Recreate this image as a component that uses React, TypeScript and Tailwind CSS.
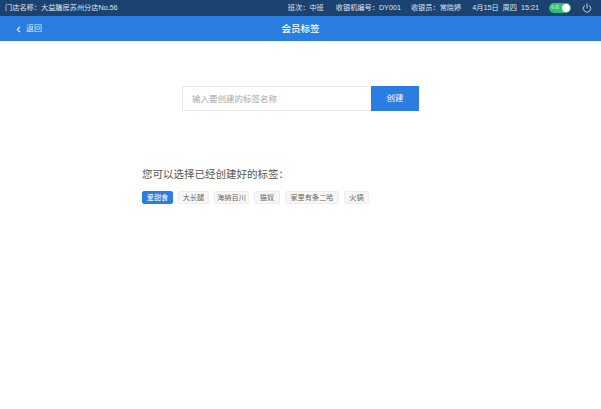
import React, { useState } from 'react';
import { ChevronLeft, Power } from 'lucide-react';

const cjk = "font-['Liberation_Sans','Noto_Sans_CJK_SC',sans-serif]";
const tags = [
  { name: '爱甜食', width: 'w-[31px]' },
  { name: '大长腿', width: 'w-[31px]' },
  { name: '海纳百川', width: 'w-[35px]' },
  { name: '猫奴', width: 'w-[26px]' },
  { name: '家里有条二哈', width: 'w-[54px]' },
  { name: '火锅', width: 'w-[25px]' },
];

export default function App() {
  const [name, setName] = useState('');
  const [active, setActive] = useState('爱甜食');

  return (
    <div className={`w-[601px] h-[409px] bg-white overflow-hidden ${cjk}`}>
      <div className="h-[16px] bg-[#1c4270] text-[#dfe7f0] text-[7.2px] leading-[16px] pl-[5px] pr-[9px] flex items-center">
        <span>门店名称：大益膳房苏州分店No.56</span>
        <div className="ml-auto flex items-center">
          <span className="mr-[12px]">班次：中班</span>
          <span className="mr-[10px]">收银机编号：DY001</span>
          <span className="mr-[11px]">收银员：常晓婷</span>
          <span className="mr-[4px]">4月15日</span>
          <span className="mr-[4px]">周四</span>
          <span className="mr-[10px]">15:21</span>
          <div className="w-[22px] h-[10px] rounded-full bg-[#2fbf71] flex items-center justify-between pl-[2px] pr-[1px] mr-[11px]">
            <span className="text-[4px] leading-none">在线</span>
            <span className="w-[8px] h-[8px] rounded-full bg-white" />
          </div>
          <Power className="w-[10px] h-[10px] text-[#dfe7f0]" strokeWidth={2} />
        </div>
      </div>

      <div className="h-[25px] bg-[#2a7de1] text-white flex items-center relative pt-[1px]">
        <button className="flex items-center pl-[14px] text-[8px] text-[#e3eefb]">
          <ChevronLeft className="w-[9px] h-[9px] mr-[3px]" strokeWidth={3} />
          返回
        </button>
        <h1 className="absolute left-0 right-0 text-center text-[9.5px] font-medium pointer-events-none">会员标签</h1>
      </div>

      <div className="flex justify-center mt-[45px]">
        <input
          value={name}
          onChange={(e) => setName(e.target.value)}
          placeholder="输入要创建的标签名称"
          className="w-[189px] h-[25px] border border-[#e8e8e8] border-r-0 pl-[9px] text-[8.5px] text-[#333] outline-none placeholder:text-[#a6a6a6]"
        />
        <button className="w-[48px] h-[25px] bg-[#2a7de1] text-white text-[8.5px]">创建</button>
      </div>

      <div className="pl-[142px] mt-[56px]">
        <h3 className="text-[10.5px] leading-[14px] text-[#555]">您可以选择已经创建好的标签：</h3>
        <div className="flex gap-[5px] mt-[10px]">
          {tags.map((t) => (
            <button
              key={t.name}
              onClick={() => setActive(t.name)}
              className={`${t.width} h-[13px] rounded-[2px] text-[7.2px] leading-[11px] ${active === t.name ? 'bg-[#2a7de1] text-white border border-[#2a7de1]' : 'bg-[#f7f7f7] text-[#666] border border-[#eeeeee]'}`}
            >
              {t.name}
            </button>
          ))}
        </div>
      </div>
    </div>
  );
}
